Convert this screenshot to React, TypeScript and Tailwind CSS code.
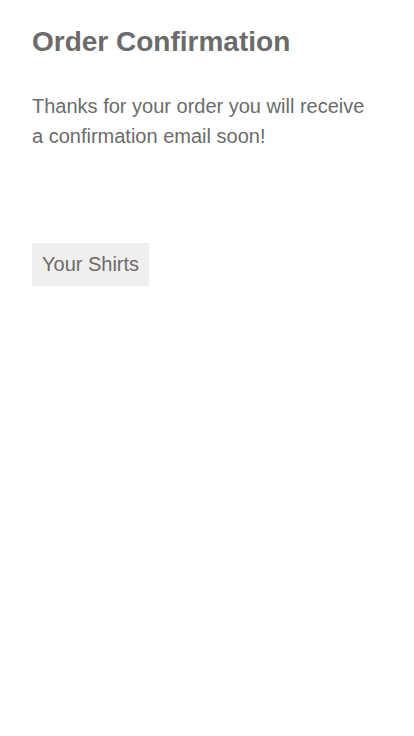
export default function App() {
  return (
    <div className="min-h-[736px] bg-white px-8 pt-6 text-[#6b6b6b] font-['Liberation_Sans',Arial,sans-serif]">
      <h1 className="text-[28px] font-bold leading-[36px]">Order Confirmation</h1>
      <p className="mt-[31px] max-w-[340px] text-[20px] leading-[30px]">
        Thanks for your order you will receive a confirmation email soon!
      </p>
      <button className="mt-[92px] bg-[#f1eeee] px-[10px] h-[43px] text-[20px] leading-[43px] text-[#6b6b6b]">
        Your Shirts
      </button>
    </div>
  );
}
